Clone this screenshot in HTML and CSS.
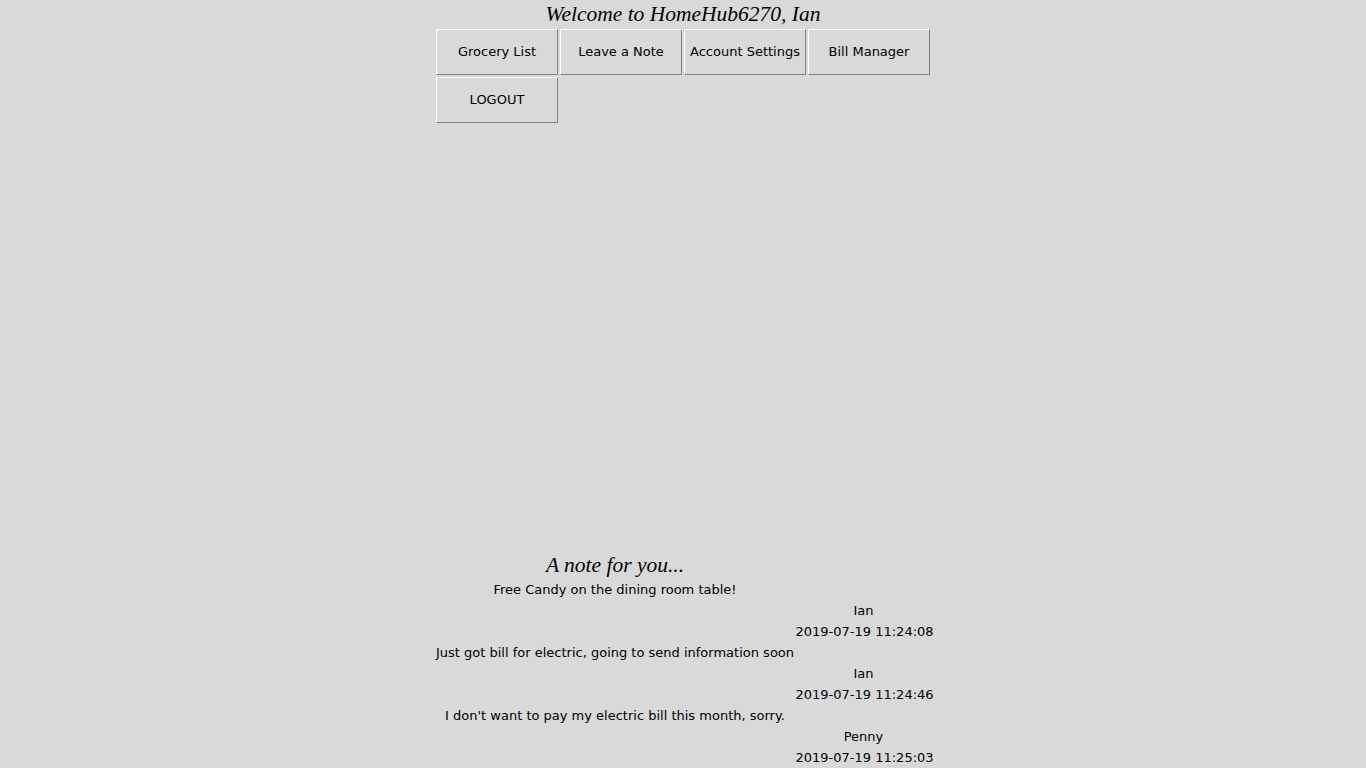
FILE: index.html
```html
<!DOCTYPE html>
<html lang="en">
<head>
<meta charset="utf-8">
<title>HomeHub6270</title>
<link rel="stylesheet" href="styles.css">
</head>
<body>
<div class="app">
  <header class="top">
    <h1 class="welcome">Welcome to HomeHub6270, Ian</h1>
    <nav class="menu">
      <button class="btn">Grocery List</button>
      <button class="btn">Leave a Note</button>
      <button class="btn">Account Settings</button>
      <button class="btn">Bill Manager</button>
      <button class="btn">LOGOUT</button>
    </nav>
  </header>
  <section class="notes">
    <h2 class="notes-title">A note for you...</h2>
    <div class="note">
      <div class="note-msg">Free Candy on the dining room table!</div>
      <div class="note-meta">Ian</div>
      <div class="note-meta">2019-07-19 11:24:08</div>
    </div>
    <div class="note">
      <div class="note-msg">Just got bill for electric, going to send information soon</div>
      <div class="note-meta">Ian</div>
      <div class="note-meta">2019-07-19 11:24:46</div>
    </div>
    <div class="note">
      <div class="note-msg">I don't want to pay my electric bill this month, sorry.</div>
      <div class="note-meta">Penny</div>
      <div class="note-meta">2019-07-19 11:25:03</div>
    </div>
  </section>
</div>
</body>
</html>
```

FILE: styles.css
```css
html, body {
  margin: 0;
  padding: 0;
  background: #d9d9d9;
}
body {
  font-family: "DejaVu Sans", sans-serif;
  font-size: 13px;
  color: #000;
  overflow: hidden;
  height: 768px;
}
.app {
  display: flex;
  flex-direction: column;
  align-items: center;
}
.top {
  width: 494px;
  display: flex;
  flex-direction: column;
}
.welcome {
  margin: 0;
  height: 29px;
  line-height: 28px;
  text-align: center;
  font-family: "Liberation Serif", serif;
  font-style: italic;
  font-weight: normal;
  font-size: 21.5px;
}
.menu {
  display: grid;
  grid-template-columns: repeat(4, 122px);
  grid-auto-rows: 46px;
  gap: 2px;
}
.btn {
  margin: 0;
  padding: 0 0 2px;
  background: #d9d9d9;
  font-family: "DejaVu Sans", sans-serif;
  font-size: 13px;
  color: #000;
  border-style: solid;
  border-width: 1px;
  border-color: #ffffff #828282 #828282 #ffffff;
  text-align: center;
}
.notes {
  margin-top: 428px;
  width: 497px;
  display: flex;
  flex-direction: column;
  line-height: 21px;
}
.notes-title {
  width: 361px;
  margin: 0;
  height: 28px;
  line-height: 28px;
  text-align: center;
  font-family: "Liberation Serif", serif;
  font-style: italic;
  font-weight: normal;
  font-size: 21.5px;
}
.note {
  display: flex;
  flex-direction: column;
}
.note-msg {
  width: 361px;
  height: 21px;
  text-align: center;
  white-space: nowrap;
}
.note-meta {
  margin-left: 361px;
  width: 136px;
  height: 21px;
  text-align: center;
  white-space: nowrap;
}
```
